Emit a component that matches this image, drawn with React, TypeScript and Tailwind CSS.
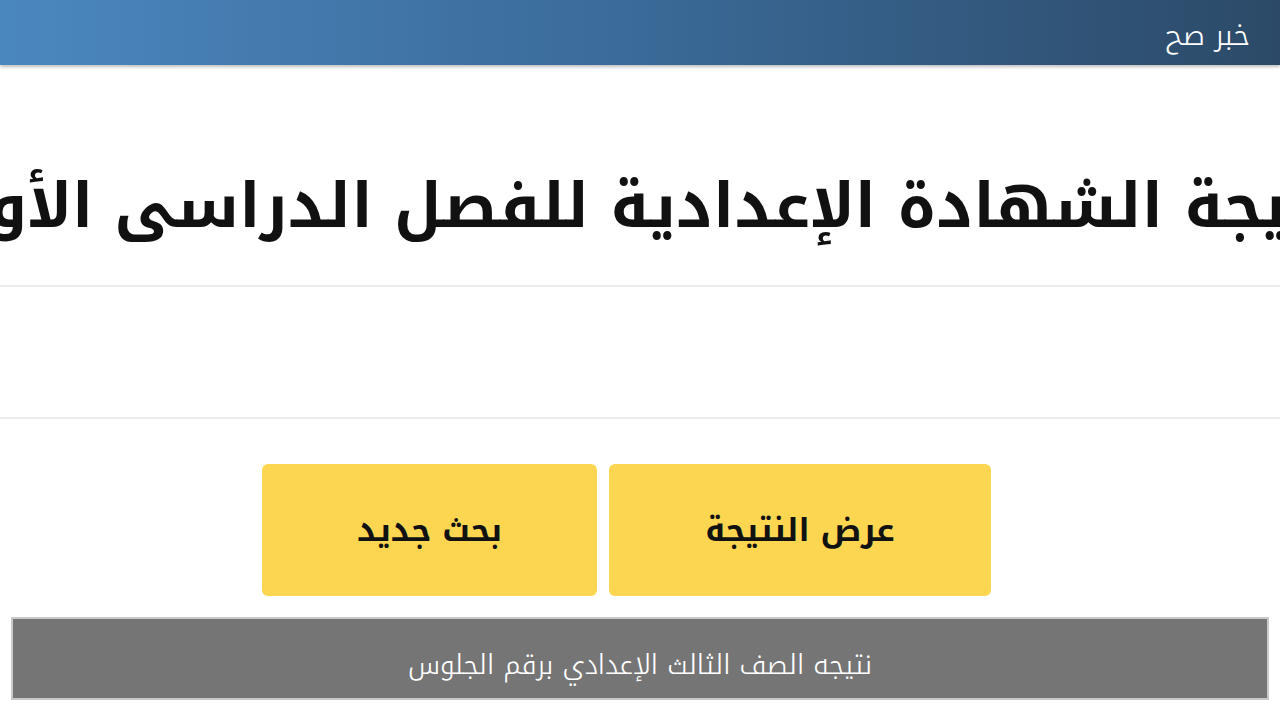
export default function App() {
  return (
    <div
      dir="rtl"
      className="w-[1280px] h-[720px] overflow-hidden bg-white flex flex-col"
      style={{ fontFamily: '"Noto Kufi Arabic", "Noto Sans Arabic", "DejaVu Sans", "Noto Sans", sans-serif' }}
    >
      {/* site banner */}
      <header className="h-[65px] shrink-0 flex items-center px-[30px] bg-gradient-to-l from-[#2c4a68] via-[#3a6a98] to-[#4b87bf] shadow-[0_2px_3px_rgba(0,0,0,0.25)]">
        <span className="text-white text-[29px] font-light pt-[6px]">خبر صح</span>
      </header>

      {/* page title, wider than the viewport */}
      <div className="h-[222px] shrink-0 flex items-center justify-center overflow-hidden border-b-2 border-[#ebebeb]">
        <h1 className="whitespace-nowrap text-[62px] font-bold text-[#111] pt-[62px]">
          نتيجة الشهادة الإعدادية للفصل الدراسى الأول
        </h1>
      </div>

      {/* seat number field */}
      <div className="h-[132px] shrink-0 border-b-2 border-[#ebebeb]" />

      <div className="flex justify-center gap-[12px] pt-[45px] pr-[27px]">
        <button className="w-[382px] h-[132px] rounded-[6px] bg-[#fdd651] text-[32px] font-bold text-[#111] pt-[2px]">
          عرض النتيجة
        </button>
        <button className="w-[335px] h-[132px] rounded-[6px] bg-[#fdd651] text-[32px] font-bold text-[#111] pt-[2px]">
          بحث جديد
        </button>
      </div>

      <div className="mx-[11px] mt-[21px] h-[83px] bg-[#757575] border-2 border-[#c9c9c9] flex items-center justify-center">
        <span className="text-white text-[27px] font-light pt-[14px]">نتيجه الصف الثالث الإعدادي برقم الجلوس</span>
      </div>
    </div>
  );
}
